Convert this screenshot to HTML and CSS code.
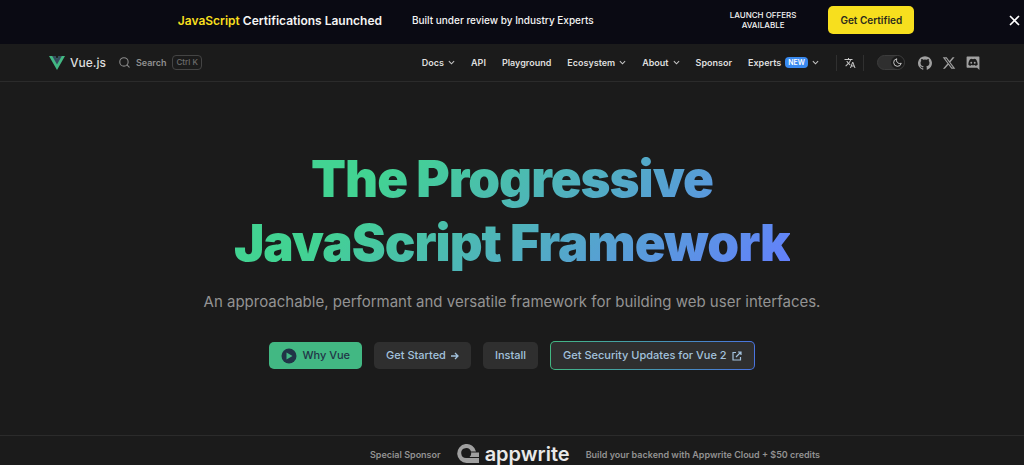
FILE: index.html
```html
<!DOCTYPE html>
<html lang="en">
<head>
<meta charset="utf-8">
<meta name="viewport" content="width=device-width, initial-scale=1">
<title>Vue.js - The Progressive JavaScript Framework</title>
<link rel="stylesheet" href="styles.css">
</head>
<body>
<aside class="banner">
  <div class="banner-content">
    <p class="banner-title"><span class="banner-accent">JavaScript</span> Certifications Launched</p>
    <p class="banner-note">Built under review by Industry Experts</p>
    <p class="banner-offer">LAUNCH OFFERS<br>AVAILABLE</p>
    <a class="banner-cta" href="#">Get Certified</a>
  </div>
  <button class="banner-close" type="button" aria-label="Close banner">
    <svg width="11" height="11" viewBox="0 0 11 11"><path d="M1 1l9 9M10 1l-9 9" stroke="#fff" stroke-width="1.6"/></svg>
  </button>
</aside>
<header class="navbar">
  <a class="logo" href="#">
    <svg width="16" height="14" viewBox="0 0 128 111"><path fill="#42b883" d="M78.8 0L64 25.6 49.2 0H0l64 110.9L128 0z"/><path fill="#35495e" d="M78.8 0L64 25.6 49.2 0H25.6L64 66.5 102.4 0z"/></svg>
    Vue.js
  </a>
  <button class="search" type="button">
    <svg width="11" height="11" viewBox="0 0 20 20" fill="none" stroke="#8b8b8b" stroke-width="2" stroke-linecap="round"><circle cx="9" cy="9" r="7.6"/><path d="M14.5 14.5l4 4"/></svg>
    <span>Search</span><kbd class="search-key">Ctrl K</kbd>
  </button>
  <nav class="menu">
    <button type="button" class="menu-item">Docs <svg class="chevron" viewBox="0 0 8 8"><path d="M1 2.5l3 3 3-3"/></svg></button>
    <a class="menu-item" href="#">API</a>
    <a class="menu-item" href="#">Playground</a>
    <button type="button" class="menu-item">Ecosystem <svg class="chevron" viewBox="0 0 8 8"><path d="M1 2.5l3 3 3-3"/></svg></button>
    <button type="button" class="menu-item">About <svg class="chevron" viewBox="0 0 8 8"><path d="M1 2.5l3 3 3-3"/></svg></button>
    <a class="menu-item" href="#">Sponsor</a>
    <button type="button" class="menu-item">Experts <span class="badge">NEW</span> <svg class="chevron" viewBox="0 0 8 8"><path d="M1 2.5l3 3 3-3"/></svg></button>
  </nav>
  <button class="language" type="button" aria-label="Change language">
    <svg width="12" height="12" viewBox="0 0 24 24" fill="#c9c9c9"><path d="M12.87 15.07l-2.54-2.51.03-.03A17.5 17.5 0 0 0 14.07 6H17V4h-7V2H8v2H1v2h11.17A15.7 15.7 0 0 1 9 11.35 15.6 15.6 0 0 1 6.69 8h-2c.73 1.63 1.73 3.17 2.98 4.56l-5.09 5.02L4 19l5-5 3.11 3.11zM18.5 10h-2L12 22h2l1.12-3h4.75L21 22h2zm-2.62 7l1.62-4.33L19.12 17z"/></svg>
  </button>
  <button class="theme-switch" type="button" role="switch" aria-checked="true" aria-label="Dark mode">
    <span class="theme-thumb"><svg width="9" height="9" viewBox="0 0 24 24" fill="none" stroke="#d8d8d8" stroke-width="2.4" stroke-linejoin="round"><path d="M10 2a9 9 0 0 0 12 12A10.2 10.2 0 1 1 10 2z"/></svg></span>
  </button>
  <div class="socials">
    <a href="#" aria-label="GitHub"><svg width="14" height="14" viewBox="0 0 24 24"><path d="M12 .3a12 12 0 0 0-3.8 23.38c.6.12.83-.26.83-.57L9 21.07c-3.34.72-4.04-1.61-4.04-1.61-.55-1.39-1.34-1.76-1.34-1.76-1.08-.74.09-.73.09-.73 1.2.09 1.83 1.24 1.83 1.24 1.08 1.83 2.81 1.3 3.5 1 .1-.78.42-1.31.76-1.61-2.67-.3-5.47-1.33-5.47-5.93 0-1.31.47-2.38 1.24-3.22-.14-.3-.54-1.52.1-3.18 0 0 1-.32 3.3 1.23a11.5 11.5 0 0 1 6.02 0c2.28-1.55 3.29-1.23 3.29-1.23.64 1.66.24 2.88.12 3.18a4.65 4.65 0 0 1 1.23 3.22c0 4.61-2.8 5.63-5.48 5.92.42.36.81 1.1.81 2.22l-.01 3.29c0 .31.2.69.82.57A12 12 0 0 0 12 .3"/></svg></a>
    <a href="#" aria-label="X"><svg width="14" height="14" viewBox="0 0 24 24"><path d="M18.24 2.25h3.31l-7.23 8.26 8.5 11.24h-6.66l-5.21-6.82L4.99 21.75H1.68l7.73-8.84L1.25 2.25h6.83l4.71 6.23zm-1.16 17.52h1.83L7.08 4.13H5.12z"/></svg></a>
    <a href="#" aria-label="Discord"><svg width="14" height="14" viewBox="0 0 24 24"><path fill-rule="evenodd" d="M2 1h20a1 1 0 0 1 1 1v22l-4-4H2a1 1 0 0 1-1-1V2a1 1 0 0 1 1-1zm5 4.500C5 8 4 11 4 15c1 1.200 2.300 1.700 4 1.800l1-1.500c2 .6 4 .6 6 0l1 1.500c1.700-.1 3-.6 4-1.800 0-4-1-7-3-9.500l-3-1-.6 1c-1-.2-1.800-.2-2.800 0L10 4.500zM9 10a1.600 1.600 0 1 0 0 3.200A1.600 1.600 0 0 0 9 10zm6 0a1.600 1.600 0 1 0 0 3.200A1.600 1.600 0 0 0 15 10z"/></svg></a>
  </div>
</header>
<main class="hero">
  <h1 class="headline"><span class="headline-text">The Progressive<br>JavaScript Framework</span></h1>
  <p class="tagline">An approachable, performant and versatile framework for building web user interfaces.</p>
  <div class="actions">
    <button class="action action-primary" type="button"><svg width="16" height="16" viewBox="0 0 16 16"><circle cx="8" cy="8" r="7.500" fill="#213547"/><path d="M5.500 4.500v7l6-3.500z" fill="#42b883"/></svg>Why Vue</button>
    <a class="action" href="#">Get Started <svg width="8" height="8" viewBox="0 0 8 8" fill="none" stroke="currentColor" stroke-width="1.300"><path d="M0 4h7M4 1l3 3-3 3"/></svg></a>
    <a class="action" href="#">Install</a>
    <a class="action action-security" href="#">Get Security Updates for Vue 2 <svg width="10" height="10" viewBox="0 0 10 10" fill="none" stroke="currentColor" stroke-width="1.200"><path d="M4 1.500H1v7.500h7.500V6M6 1h3v3M9 1L4 6"/></svg></a>
  </div>
</main>
<footer class="sponsor">
  <span>Special Sponsor</span>
  <a class="sponsor-logo" href="#">
    <svg width="22" height="20" viewBox="0 0 22 20"><path fill="#a0a0a0" d="M22 14v5H9.500A9.500 9.500 0 1 1 19 7.500h-5a5 5 0 1 0-4.500 6.500zM22 8.500v4.500h-9.500a4.500 4.500 0 0 0 1.500-4.500z"/></svg>
    appwrite
  </a>
  <span>Build your backend with Appwrite Cloud + $50 credits</span>
</footer>
</body>
</html>
```
FILE: styles.css
```css
* { box-sizing: border-box; }
html { background: #1b1b1b; }
body {
  margin: 0;
  min-height: 100vh;
  display: flex;
  flex-direction: column;
  background: #1b1b1b;
  color: #dedede;
  font-family: Inter, "Liberation Sans", sans-serif;
  font-size: 9px;
  overflow: hidden;
}
p, h1 { margin: 0; }
a { color: inherit; text-decoration: none; }
button { margin: 0; padding: 0; border: 0; background: none; color: inherit; font: inherit; cursor: pointer; }
svg { display: block; flex: none; }

.banner { display: flex; align-items: center; height: 44px; padding: 0 4px 4px 0; background: #0a0a13; color: #f4f4f4; }
.banner-content { flex: 1; display: flex; align-items: center; justify-content: center; padding-left: 83px; }
.banner-title { font-size: 12px; font-weight: 600; }
.banner-accent { color: #f7df1e; }
.banner-note { margin-left: 30px; font-size: 10px; font-weight: 500; }
.banner-offer { margin-left: 136px; font-size: 8px; font-weight: 500; line-height: 10px; text-align: center; }
.banner-cta { margin-left: 32px; padding: 0 12px; border-radius: 5px; background: #f7df1e; color: #2b2a1c; font-size: 10px; font-weight: 600; line-height: 28px; }

.navbar { display: flex; align-items: center; height: 38px; padding: 0 44px 0 49px; border-bottom: 1px solid #2b2b2b; font-weight: 600; white-space: nowrap; }
.logo { display: flex; align-items: center; gap: 5px; font-size: 12px; font-weight: 500; }
.search { display: flex; align-items: center; gap: 6px; margin-left: 13px; color: #8f8f8f; }
.search-key { padding: 0 3px; border: 1px solid #444; border-radius: 4px; color: #6d6d6d; font: 500 8px/13px Inter, sans-serif; }
.menu { display: flex; align-items: center; gap: 16px; margin-left: auto; }
.menu-item { display: flex; align-items: center; gap: 4px; }
.chevron { width: 7px; height: 7px; fill: none; stroke: #c5c5c5; stroke-width: 1.2; }
.badge { padding: 0 3px; border-radius: 4px; background: #3a8af0; color: #fff; font-size: 7px; line-height: 11px; }
.language { margin-left: 17px; padding: 2px 7px; border: solid #303030; border-width: 0 1px; }
.theme-switch { display: flex; justify-content: flex-end; width: 28px; height: 15px; margin-left: 13px; border: 1px solid #3c3c3c; border-radius: 8px; background: #2f2f2f; }
.theme-thumb { display: grid; place-items: center; width: 13px; height: 13px; border-radius: 50%; background: #1a1a1a; }
.socials { display: flex; gap: 10px; margin-left: 13px; fill: #a0a0a0; }

.hero { flex: 1; padding: 65px 24px 64px; text-align: center; }
.headline { font-size: 51px; font-weight: 900; line-height: 64px; letter-spacing: -1px; }
.headline-text { display: inline-block; background: linear-gradient(135deg, #42d392 25%, #647eff); -webkit-background-clip: text; background-clip: text; color: transparent; }
.tagline { margin-top: 16px; color: #939393; font-size: 15px; line-height: 22px; }
.actions { display: flex; justify-content: center; align-items: center; gap: 12px; margin-top: 28px; }
.action { display: flex; align-items: center; gap: 5px; padding: 0 12px; border-radius: 5px; background: #2f2f2f; color: #a3c2dd; font-size: 11px; font-weight: 500; line-height: 27px; white-space: nowrap; }
.action-primary { background: #42b883; color: #213547; }
.action-security { border: 1px solid transparent; background: linear-gradient(#2f2f2f, #2f2f2f) padding-box, linear-gradient(90deg, #42b883, #4a74e0) border-box; }

.sponsor { display: flex; align-items: center; justify-content: center; gap: 16px; height: 30px; padding: 7px 0 0 166px; border-top: 1px solid #2b2b2b; color: #929292; font-weight: 600; white-space: nowrap; }
.sponsor-logo { display: flex; align-items: center; gap: 6px; color: #e8e8e8; font-size: 20px; font-weight: 600; line-height: 22px; }
```
